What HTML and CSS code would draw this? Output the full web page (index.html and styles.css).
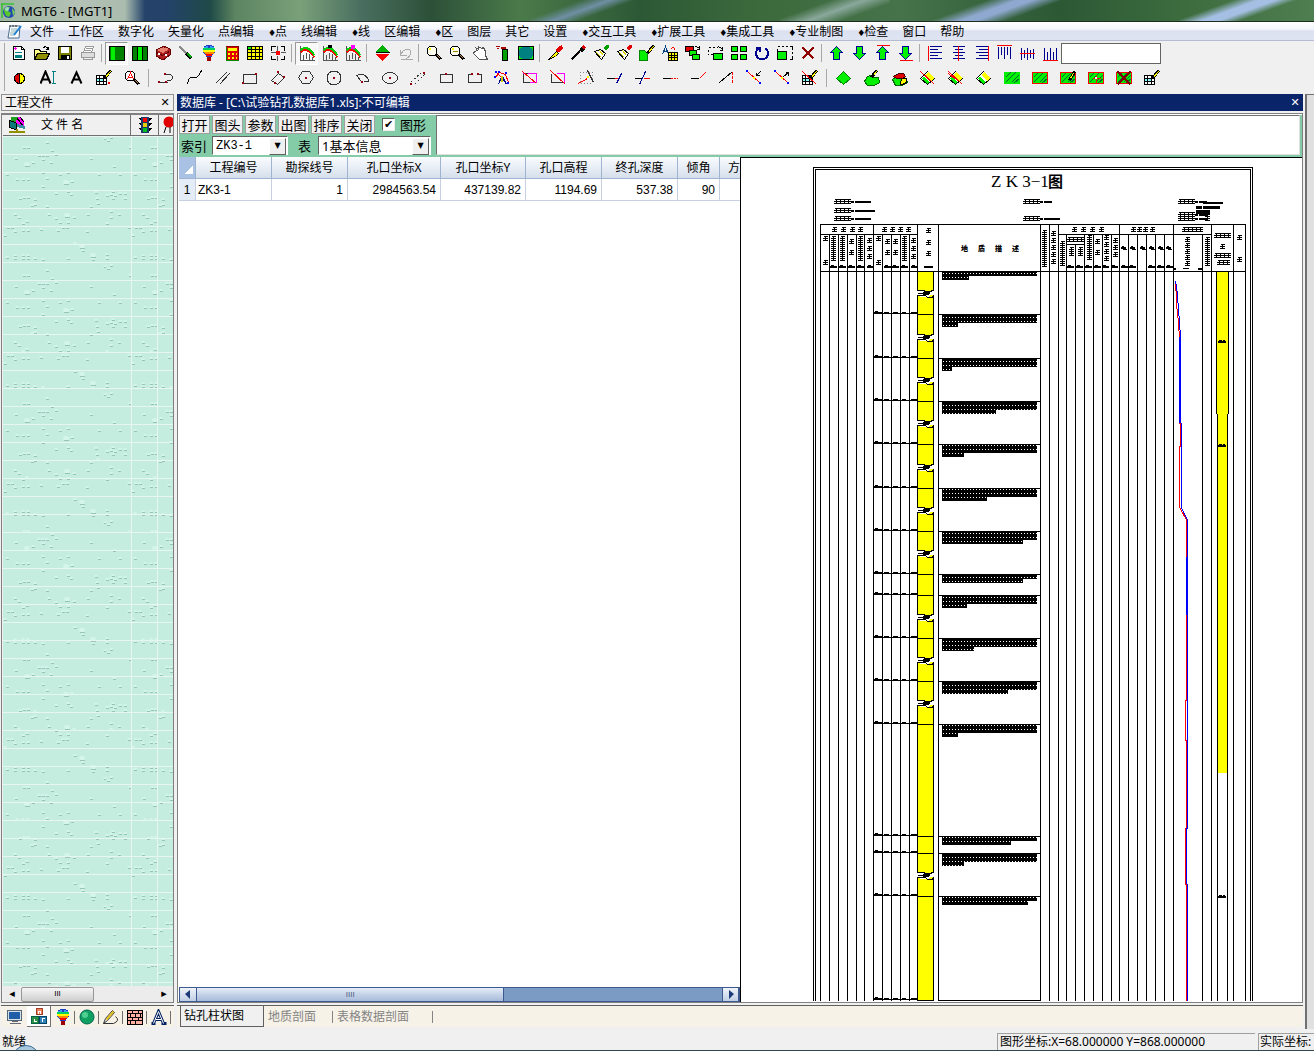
FILE: index.html
```html
<!DOCTYPE html>
<html lang="zh-CN">
<head>
<meta charset="utf-8">
<title>MGT6 - [MGT1]</title>
<link rel="stylesheet" href="styles.css">
</head>
<body>
<header class="titlebar">
  <svg class="app-icon" width="16" height="16" viewBox="0 0 16 16"><circle cx="8" cy="9" r="6" fill="#2348b4"/><path d="M3 6q3-3 6-2l-2 4 3 2-2 4q-5-1-5-8z" fill="#58c830"/><path d="M11 5l3 4-2 4z" fill="#7fd850"/><circle cx="6" cy="6" r="2" fill="#bfe6ff" opacity=".7"/><path d="M0 1h13M1 1v14" stroke="#00c800" fill="none"/></svg>
  <h1 class="app-title">MGT6 - [MGT1]</h1>
</header>
<nav class="menubar">
  <svg class="doc-icon" width="16" height="16" viewBox="0 0 16 16"><path d="M3 2h10l-1 12H1z" fill="#fff" stroke="#4a6a8a"/><path d="M4 5h6M4 7h6M3 9h5M3 11h4" stroke="#8ab0b8"/><path d="M14 2L7 11" stroke="#1f7fd0" stroke-width="2"/><path d="M3 1v2M6 1v2M9 1v2" stroke="#333"/></svg>
  <a href="#">文件</a><a href="#">工作区</a><a href="#">数字化</a><a href="#">矢量化</a><a href="#">点编辑</a><a href="#"><i>♦</i>点</a><a href="#">线编辑</a><a href="#"><i>♦</i>线</a><a href="#">区编辑</a><a href="#"><i>♦</i>区</a><a href="#">图层</a><a href="#">其它</a><a href="#">设置</a><a href="#"><i>♦</i>交互工具</a><a href="#"><i>♦</i>扩展工具</a><a href="#"><i>♦</i>集成工具</a><a href="#"><i>♦</i>专业制图</a><a href="#"><i>♦</i>检查</a><a href="#">窗口</a><a href="#">帮助</a>
</nav>
<div class="toolbars">
  <div class="toolbar" id="bar-main"></div>
  <div class="toolbar wide" id="bar-edit"></div>
</div>
<div class="workspace">
  <aside class="side">
    <div class="side-title"><span>工程文件</span><button class="close" aria-label="关闭工程文件">✕</button></div>
    <div class="side-box">
      <div class="list-head">
        <div class="head-name">
          <svg width="18" height="18" viewBox="0 0 18 18" shape-rendering="crispEdges"><path d="M3 1h9l4 3v7H9z" fill="#f0f"/><path d="M3 1h7l-3 6-4-2z" fill="#20a020"/><path d="M1 4l7 3v7l-7-3z" fill="#087878" stroke="#000"/><path d="M9 2l6 8M12 1l4 5" stroke="#000"/><path d="M9 8l8 2v3l-8-2z" fill="#3090a0"/><path d="M1 16h16M9 13v3" stroke="#909000" stroke-width="2"/></svg>
          <span>文 件 名</span>
        </div>
        <div class="head-light"><svg width="14" height="18" viewBox="0 0 14 18" shape-rendering="crispEdges"><path d="M0 2h14l-3 3H3zM0 7h14l-3 3H3zM0 12h14l-3 3H3z" fill="#000"/><path d="M3 1h8v16H3z" fill="#1c3a6a"/><path d="M5 2h4v4H5z" fill="#f00"/><path d="M5 7h4v4H5z" fill="#e8d000"/><path d="M5 12h4v4H5z" fill="#00c020"/></svg></div>
        <div class="head-ball"><svg width="10" height="18" viewBox="0 0 10 18"><circle cx="6" cy="6" r="5.500" fill="#e00000"/><path d="M3 11l-2 6M7 11v6" stroke="#000"/></svg></div>
      </div>
      <div class="file-list" id="file-list"></div>
      <div class="hbar"><span class="arrow">◂</span><span class="thumb">III</span><span class="arrow end">▸</span></div>
    </div>
    <div class="side-tabs" id="side-tabs"></div>
  </aside>
  <main class="main">
    <div class="main-title"><span>数据库 - [C:\试验钻孔数据库1.xls]:不可编辑</span><button class="close" aria-label="关闭数据库">✕</button></div>
    <div class="main-box">
      <div class="form">
        <div class="controls">
          <div class="row">
            <button class="btn">打开</button><button class="btn">图头</button><button class="btn">参数</button><button class="btn">出图</button><button class="btn">排序</button><button class="btn">关闭</button>
            <label class="check"><input type="checkbox" checked>图形</label>
          </div>
          <div class="row">
            <label for="idx">索引</label>
            <span class="combo"><select id="idx" class="idx"><option>ZK3-1</option></select></span>
            <label for="tbl" class="tbl-label">表</label>
            <span class="combo"><select id="tbl" class="tbl"><option>1基本信息</option></select></span>
          </div>
        </div>
        <textarea class="memo" aria-label="内容"></textarea>
      </div>
      <div class="panes">
        <section class="data">
          <div class="table-wrap">
            <table>
              <colgroup><col class="c0"><col class="c1"><col class="c1"><col class="c2"><col class="c3"><col class="c1"><col class="c1"><col class="c4"><col class="c1"></colgroup>
              <thead><tr><th class="corner"></th><th>工程编号</th><th>勘探线号</th><th>孔口坐标X</th><th>孔口坐标Y</th><th>孔口高程</th><th>终孔深度</th><th>倾角</th><th class="cut">方</th></tr></thead>
              <tbody><tr><th>1</th><td class="txt">ZK3-1</td><td>1</td><td>2984563.54</td><td>437139.82</td><td>1194.69</td><td>537.38</td><td>90</td><td></td></tr></tbody>
            </table>
          </div>
          <div class="xbar"><span class="xbtn"><svg width="16" height="13" viewBox="0 0 16 13"><path d="M10 2v9L5 6z" fill="#1c3a78"/></svg></span><span class="xthumb">IIII</span><span class="xbtn end"><svg width="16" height="13" viewBox="0 0 16 13"><path d="M6 2v9l5-5z" fill="#1c3a78"/></svg></span></div>
        </section>
        <section class="log" id="log"></section>
      </div>
    </div>
    <div class="main-tabs"><a class="on" href="#">钻孔柱状图</a><a href="#">地质剖面</a><a class="last" href="#">表格数据剖面</a></div>
  </main>
  <div class="gutter"></div>
</div>
<footer class="status"><span class="ready">就绪</span><span class="cell">图形坐标:X=68.000000 Y=868.000000</span><span class="cell short">实际坐标:</span><span class="orb"></span></footer>
<script src="app.js"></script>
</body>
</html>
```
FILE: styles.css
```css
* { box-sizing: border-box; }
body {
  margin: 0;
  height: 100vh;
  display: flex;
  flex-direction: column;
  overflow: hidden;
  background: #f0f0f0;
  color: #000;
  font: 12px/16px "Noto Sans", "Noto Sans CJK SC", sans-serif;
}
button, input, select, textarea { font: inherit; color: inherit; margin: 0; padding: 0; border-radius: 0; }
a { color: inherit; text-decoration: none; }
svg { display: block; flex: none; }

.titlebar {
  height: 22px;
  flex: none;
  display: flex;
  align-items: center;
  gap: 4px;
  padding-left: 1px;
  border-bottom: 1px solid #1c2c20;
  background:
    linear-gradient(90deg, #9db79f 0, #b4c2b6 80px, #a9bcae 125px, transparent 145px),
    linear-gradient(160deg, transparent 30%, #8fa8d0 46%, #8fa8d0 54%, transparent 70%) 930px 0 / 130px 22px no-repeat,
    linear-gradient(160deg, transparent 34%, #a5bfe4 46%, #a5bfe4 54%, transparent 64%) 1160px 0 / 154px 22px no-repeat,
    linear-gradient(160deg, transparent 34%, #6f8fa4 50%, transparent 64%) 520px 0 / 120px 22px no-repeat,
    linear-gradient(160deg, transparent 30%, #8aa89c 50%, transparent 70%) 780px 0 / 110px 22px no-repeat,
    linear-gradient(90deg, #24426a 0, #24426a 165px, #1f4a48 210px, #5c8460 235px, #7aa07a 300px, #4a6f60 360px, #2c5038 430px, #4b7a4a 520px, #2d5835 640px, #3c6a3c 760px, #46734a 900px, #2c5834 1060px, #3f6f40 1200px, #4f7f50 100%);
}
.app-title { margin: 0; font-size: 13px; font-weight: 400; }

.menubar {
  height: 19px;
  flex: none;
  display: flex;
  align-items: center;
  gap: 14px;
  padding: 2px 0 0 7px;
  border-bottom: 1px solid #b4bcd4;
  background: linear-gradient(#fff 0, #f4f6fb 40%, #dce1f1 50%, #dfe4f3 100%);
  white-space: nowrap;
}
.menubar .doc-icon { margin-right: -7px; }
.menubar i { display: inline-block; width: 7px; font: 9px/12px "DejaVu Sans", sans-serif; }

.toolbars { height: 53px; flex: none; padding: 0 0 0 7px; background: linear-gradient(#a8a8a8, #a8a8a8) 4px 2px / 1px 48px no-repeat; }
.toolbar { display: flex; align-items: center; height: 24px; }
.toolbar.wide { height: 26px; margin-left: -1px; }
.toolbar button {
  width: 23px;
  height: 23px;
  border: 1px solid transparent;
  background: none;
  display: flex;
  align-items: center;
  justify-content: center;
  flex: none;
}
.toolbar button.pressed { background: #f8f8f8; border-color: #999 #fff #fff #999; }
.toolbar.wide button { width: 28px; }
.toolbar .sep { width: 6px; height: 18px; flex: none; background: linear-gradient(#a8a8a8, #a8a8a8) 2px 0 / 1px 100% no-repeat; }
.toolbar input { width: 100px; height: 21px; border: 1px solid #646464; background: #fff; }

.workspace { flex: 1; min-height: 0; display: flex; gap: 3px; }
.side { width: 174px; flex: none; display: flex; flex-direction: column; padding-left: 1px; }
.close { border: 0; background: none; width: 14px; font: 11px/14px "DejaVu Sans", sans-serif; }
.side-title {
  height: 17px; flex: none;
  display: flex; align-items: center; justify-content: space-between;
  padding: 0 1px 0 3px;
  border: 1px solid #909090;
}
.side-box { flex: 1; min-height: 0; margin-top: 2px; border: 1px solid #808080; border-top-width: 2px; display: flex; flex-direction: column; background: #f0f0f0; padding-left: 1px; }
.list-head { display: flex; height: 21px; flex: none; border-bottom: 1px solid #707070; overflow: hidden; }
.list-head > div { display: flex; align-items: center; border-right: 1px solid #707070; }
.head-name { width: 128px; flex: none; gap: 15px; padding-left: 5px; }
.head-light { width: 28px; flex: none; padding-left: 7px; }
.list-head .head-ball { flex: 1; padding-left: 4px; border-right: 0; }
.file-list { flex: 1; min-height: 0; overflow: hidden; background: #c4ede0; }
.hbar { height: 16px; flex: none; display: flex; align-items: center; background: #ececec; }
.hbar .arrow { width: 18px; text-align: center; font: 11px/14px "DejaVu Sans", sans-serif; }
.hbar .end { margin-left: auto; }
.hbar .thumb { width: 73px; height: 15px; border: 1px solid #979797; border-radius: 2px; background: linear-gradient(#f6f6f6, #e2e2e2 50%, #cfcfcf); text-align: center; font: 8px/12px "Liberation Sans", sans-serif; }
.side-tabs { height: 22px; flex: none; margin-top: 2px; display: flex; background: #f7f2e8; border-top: 1px solid #606060; margin-bottom: 4px; padding-left: 2px; }
.side-tabs button { width: 24px; height: 21px; border: 0; background: none; display: flex; align-items: center; justify-content: center; }
.side-tabs button + button { background: linear-gradient(#707070, #707070) 100% 5px / 1px 13px no-repeat; }
.side-tabs button.on { background: #fff; border: 1px solid #707070; border-top: 0; border-left: 0; }

.main { flex: 1; min-width: 0; display: flex; flex-direction: column; }
.main-title { height: 17px; flex: none; background: #0a246a; color: #fff; display: flex; align-items: center; justify-content: space-between; padding: 0 1px 0 3px; }
.main-box { flex: 1; min-height: 0; margin-top: 2px; border: 1px solid #808080; padding: 1px 0 0 1px; display: flex; flex-direction: column; background: #fff; }
.form { height: 42px; flex: none; display: flex; background: #84cba8; padding: 0 2px 1px 0; gap: 5px; }
.controls { display: flex; flex-direction: column; gap: 2px; font-size: 13px; flex: none; }
.row { display: flex; align-items: center; gap: 2px; height: 19px; white-space: nowrap; }
.btn { width: 31px; height: 19px; border: 1px solid; border-color: #fff #505050 #505050 #fff; background: #f0f0f0; line-height: 16px; outline: 1px solid #a0a0a0; outline-offset: -1px; }
.check { display: flex; align-items: center; gap: 5px; margin-left: 5px; }
.check input { appearance: none; width: 13px; height: 13px; background: #fff; border: 1px solid; border-color: #606060 #eee #eee #606060; display: grid; place-items: center; }
.check input::before { content: "✔"; font: 11px/11px "DejaVu Sans", sans-serif; }
.row > label[for] { padding-left: 2px; }
.row > .tbl-label { padding: 0 4px 0 6px; }
.row > label[for="tbl"] { padding-left: 8px; padding-right: 5px; }
.combo { position: relative; display: flex; }
.row > label[for="idx"] + .combo { margin-left: 3px; }
.combo select { appearance: none; height: 19px; border: 1px solid; border-color: #606060 #fff #fff #606060; background: #fff; padding-left: 3px; line-height: 16px; }
.combo .idx { width: 76px; font: 12px/16px "Liberation Mono", monospace; }
.combo .tbl { width: 113px; }
.combo::after { content: "▼"; position: absolute; right: 2px; top: 2px; width: 15px; height: 15px; background: #f0f0f0; border: 1px solid; border-color: #fff #606060 #606060 #fff; font: 8px/14px "DejaVu Sans", sans-serif; text-align: center; pointer-events: none; }
.memo { flex: 1; height: 40px; resize: none; background: #fff; border: 1px solid; border-color: #707070 #e0e0e0 #e0e0e0 #707070; }

.panes { flex: 1; min-height: 0; display: flex; }
.data { flex: 1 1 0; min-width: 0; display: flex; flex-direction: column; }
.table-wrap { flex: 1; min-height: 0; overflow: hidden; }
table { border-collapse: separate; border-spacing: 0; table-layout: fixed; width: 617px; }
.c0 { width: 17px; } .c1 { width: 76px; } .c2 { width: 93px; } .c3 { width: 85px; } .c4 { width: 42px; }
th, td { height: 22px; padding: 0 4px; border: solid #c6d0e0; border-width: 0 1px 1px 0; font-weight: 400; white-space: nowrap; overflow: hidden; line-height: 18px; }
thead th { background: linear-gradient(#fafcfe, #e8eef6 50%, #d5dfeb); border-color: #9fb4d0; padding: 0; }
thead th.cut { text-align: left; padding-left: 8px; }
thead th.corner { background: linear-gradient(135deg, transparent 60%, #fff 60%) 4px 5px / 10px 12px no-repeat, #a9c1e2; }
tbody th { background: #e4ecf7; padding: 0; }
td, tbody th { font: 12px/18px "Liberation Sans", sans-serif; }
td { text-align: right; }
td.txt { text-align: left; padding-left: 2px; }
.xbar { height: 15px; flex: none; display: flex; background: #7b9ac4; border: 1px solid #3d5a90; }
.xbtn { width: 17px; background: linear-gradient(#f0f4fa, #c0cee4); border-right: 1px solid #3d5a90; }
.xbtn.end { margin-left: auto; border-left: 1px solid #3d5a90; }
.xthumb { width: 55%; background: linear-gradient(#e6edf8, #c4d2e8 50%, #a9bcdb); border-right: 1px solid #3d5a90; text-align: center; color: #50607c; font: 8px/13px "Liberation Sans", sans-serif; }
.log { flex: 1 1 0; min-width: 0; overflow: hidden; border-left: 1px solid #000; border-top: 1px solid #000; background: #fff; }

.main-tabs { height: 22px; flex: none; margin: 2px 0 4px; display: flex; background: #f7f2e8; border-top: 1px solid #606060; padding-left: 3px; color: #848484; line-height: 21px; }
.main-tabs a { width: 69px; padding-left: 3px; }
.main-tabs a + a { padding-left: 4px; background: linear-gradient(#848484, #848484) 100% 5px / 1px 12px no-repeat; }
.main-tabs a.on { width: 84px; background: #f0f0f0; color: #000; border: 1px solid #606060; border-top: 0; line-height: 20px; }
.main-tabs a.last { width: 100px; }
.gutter { width: 9px; flex: none; background: #e0e0e0; border-left: 2px solid #707070; border-top: 1px solid #707070; margin-left: -1px; margin-bottom: 2px; }

.status { height: 20px; flex: none; display: flex; gap: 3px; align-items: stretch; position: relative; border-bottom: 1px solid #304850; padding-top: 2px; white-space: nowrap; overflow: hidden; }
.ready { flex: 1; padding: 1px 0 0 2px; }
.status .cell { width: 258px; border-left: 1px solid #a0a0a0; border-top: 1px solid #a0a0a0; padding-left: 2px; line-height: 16px; }
.status .short { width: 56px; padding-left: 1px; }
.orb { position: absolute; left: 12px; top: 14px; width: 28px; height: 28px; border-radius: 50%; border: 1px solid #3c6c94; background: #a8c8e0; }
```
FILE: app.js
```js
// Small builders for the 16x16 pixel icons.
const S = (d, c = '#000', w = 1) => `<path d="${d}" fill="none" stroke="${c}" stroke-width="${w}" transform="translate(.5 .5)"/>`;
const F = (d, c = '#000') => `<path d="${d}" fill="${c}"/>`;
const B = (d, fill, c = '#000') => `<path d="${d}" fill="${fill}" stroke="${c}" transform="translate(.5 .5)"/>`;
const dots = (list, c = '#900010') => list.map(([x, y]) => F(`M${x} ${y}h2v2h-2z`, c)).join('');
const svg = (body, w = 16, crisp = true) => `<svg width="${w}" height="16" viewBox="0 0 ${w} 16"${crisp ? ' shape-rendering="crispEdges"' : ''}>${body}</svg>`;

const G = '#00f000', N = '#000090', R = '#f00';
const curve = (dot) => S('M1 0v15h14M4 9v6M7 7v6M10 8v7M13 11v4', '#555') + S('M1 7q6-7 14 5', '#f00', 2) + S('M1 5q6-7 14 5', '#00d000', 2) + dot;
const lens = '<circle cx="6" cy="6" r="5" fill="#fffff0" stroke="#000"/>' + F('M3 3h2v2H3z', '#ff0') + S('M10 9l4 5', '#000', 3) + S('M11 10l3 3', '#c08030');
const balloon = F('M5 0h6v1h2v2h1v4l-2 3h-1v2H5v-2H4L2 7V3h1V1h2z', '#2040c0') + F('M5 1h2v2H3V2h2zM9 1h2v1h2v1H9z', '#30a0ff') + F('M2 3h12v2H2z', '#00d060') + F('M2 5h12v2H2z', '#ff0') + F('M3 7h10v2H4z', '#f80') + F('M5 9h6v2H5z', '#f00') + F('M6 12h4v4H6z', '#a00000');
const brush = (c) => S('M15 0l-4 4', c, 3) + B('M1 6l6-2 5 4-4 6z', '#fff') + S('M3 7l5 5M6 5l4 5', '#d8d000');
const pencil = S('M14 0L8 8', '#000', 3) + S('M14 1L9 7', '#ff0') ;
const grid = B('M0 5h10v9H0z', '#fff') + S('M0 8h10M0 11h10M3 5v9M7 5v9') + F('M1 9h2v2H1zM4 9h3v2H4z', '#8ff');
const arrowUp = B('M7 1l6 6h-3v7H4V7H1z', G, '#000098'), arrowDn = B('M7 14l6-6h-3V1H4v7H1z', G, '#000098');
const hatch = F('M0 2h16v12H0z', G) + S('M1 7l5-5M1 12L11 2M7 12l7-7M10 12l5-4', '#063');
const redbox = S('M0 2h15v11H0z', R);
const diamond = B('M7 1l7 7-7 6-7-6z', '#fff') + F('M8 2l6 6-3 3-5-6z', '#ff0') + F('M2 8l2-1 5 5-2 2z', G);
const poly = (d) => S(d, '#333');

const main = [
  ['新建', B('M2 1h8l3 3v10H2z', '#fff') + S('M10 1v3h3') + F('M4 7h7v1H4zM4 10h7v3H4z', '#008080') + F('M3 3h3v1H3zM4 2h1v3H4z', '#f0f')],
  ['打开', B('M0 4h5l1 2h6v8H0z', '#ff8') + B('M3 8h12l-3 6H0z', '#909000') + S('M9 2q3-2 5 2M14 1v3h-3')],
  ['保存', B('M1 1h13v13H1z', '#808000') + F('M4 2h8v6H4z', '#fff') + F('M4 10h9v5H4z') + F('M10 11h2v3h-2z', '#fff')],
  ['打印', B('M5 1h8l-2 6H3z', '#fff', '#999') + B('M1 7h13v5H1z', '#ddd', '#999') + S('M5 3h6M4 5h6M3 12h9v2H3z', '#999')], '|',
  ['单窗', B('M0 1h15v14H0z', '#008000') + F('M2 2h4v13H2z', G), 1],
  ['双窗', B('M0 1h15v14H0z', '#008000') + F('M6 2h4v13H6z', G) + S('M5 1v14M10 1v14')],
  ['工具箱', '<path d="M1 5l8-4 6 3v6l-7 5-7-4z" fill="#b02020" stroke="#600"/>' + F('M2 5l7-3 5 2-6 4z', '#e88070') + S('M5 3q3-4 5 0M1 7l6 3 7-4', '#600') + F('M3 8h2v2H3zM10 9h2v2h-2z', '#fff')],
  ['螺丝刀', S('M1 1l7 7', '#888', 2) + S('M8 8l5 5', '#000', 4) + S('M9 8l4 4', '#00a000', 2)],
  ['气球', balloon],
  ['计算器', B('M2 1h12v14H2z', '#e00000', '#800') + F('M4 3h9v3H4z', '#ff0') + F('M4 8h2v2H4zM8 8h2v2H8zM12 8h1v2h-1zM4 12h2v2H4zM8 12h2v2H8zM12 12h1v2h-1z', '#ff0') + S('M2 1v14h12', '#080')],
  ['表格', B('M0 1h15v13H0z', '#ff0') + S('M0 4h15M0 7h15M0 11h15M4 1v13M8 1v13M12 1v13') + F('M1 2h3v2H1z', G)],
  ['定位', S('M1 5V1h4M10 1h4v4M14 10v4h-4M5 14H1v-4') + S('M7 0v5M7 10v5M0 7h5M10 7h5', '#555') + F('M6 6h4v4H6z', R)], '|',
  ['曲线一', curve(''), 1], ['曲线二', curve(F('M6 0h4v3H6z'))], ['曲线三', curve(F('M6 0h4v4H6z', '#f0f'))], '|',
  ['上下', F('M8 0l7 7H1z', '#00b000') + F('M8 16l7-7H1z', '#f00') + S('M1 7h14')],
  ['撤销', S('M3 4v6h6M3 9Q8 1 13 5q2 4-4 8M3 14h12', '#aaa')], '|',
  ['放大', lens], ['缩小', lens + F('M4 6h5v1H4z', '#a08000')],
  ['移动', B('M2 6l3-1-2-3 3 2V1l3 2 2-1 2 4v4l2 4H7L1 8z', '#fff', '#555')],
  ['喷漆', B('M7 4h5v11H7z', '#00a000') + F('M1 1h4v1H1zM2 3h2v1H2zM6 2h5v2H6z', '#a00')],
  ['全图', B('M0 1h15v13H0z', '#008080') + F('M1 2h3v1H2v2H1zM12 2h3v3h-1V3h-2zM1 11h1v2h2v1H1zM14 11h1v3h-3v-1h2z', G)], '|',
  ['画笔', S('M15 1L9 6', '#e00000', 4) + B('M9 6L1 14l7-3 3-3z', '#ff0')],
  ['吸管', S('M9 6L1 14', '#000', 2) + S('M14 1l-4 5', '#000', 4) + S('M14 1l-2 2', '#d00', 3)],
  ['绿刷', brush('#00a000')], ['红刷', brush('#e00000')],
  ['修改', B('M0 5h5l3 3v7H0z', G, '#080') + pencil],
  ['属性', S('M0 9l3-8 3 8M1 6h4', '#004080') + B('M6 7h9v8H6z', '#ff0') + S('M6 10h9M6 12h9M9 7v8M12 7v8') + S('M8 4q3-4 5 1', R)],
  ['复制', B('M0 1h8v5H0z', '#e00000') + B('M4 5h7v5H4z', G) + B('M7 9h7v5H7z', G) + S('M10 1l5 2M14 0v4h-3')],
  ['粘贴', S('M0 2h2m2 0h2m2 0h1M0 4v2m0 2v1m2 0h2') + B('M5 8h9v6H5z', G) + S('M10 1l5 3M14 1v4h-3')],
  ['阵列', B('M0 1h6v5H0zM9 1h6v5H9zM0 9h6v5H0zM9 9h6v5H9z', G)],
  ['旋转', S('M4 3a6 6 0 1 0 7 0M1 2h4v4', N, 2)],
  ['缩放', S('M0 1h2m2 0h2m2 0h2m2 0h3v3m0 2v2m0 2v4h-3M0 3v3') + B('M0 6h9v8H0z', G)],
  ['删除', S('M2 2l11 11M13 2L2 13', '#900000', 2)], '|',
  ['上移', arrowUp], ['下移', arrowDn], ['置顶', arrowUp + S('M1 0h13', R)], ['置底', arrowDn + S('M1 15h13', R)], '|',
  ['左对齐', S('M2 1h12M2 4h8M2 7h12M2 10h8M2 13h12', N) + S('M1 0v15', R)],
  ['水平居中', S('M2 1h12M4 4h8M2 7h12M4 10h8M2 13h12', N) + S('M8 0v15', R)],
  ['右对齐', S('M2 1h12M5 4h9M2 7h12M5 10h9M2 13h12', N) + S('M15 0v15', R)],
  ['上对齐', S('M2 1v12M5 1v8M8 1v12M11 1v8M14 1v12', N) + S('M0 0h15', R)],
  ['垂直居中', S('M2 2v12M5 4v8M8 2v12M11 4v8M14 3v10', N) + S('M0 8h15', R)],
  ['下对齐', S('M2 2v12M5 6v8M8 2v12M11 6v8M14 2v12', N) + S('M0 15h15', R)],
];
const edit = [
  ['颜色', F('M8 3a5 5 0 0 0 0 11z', '#e00000') + F('M8 3a5 5 0 0 1 0 11z', '#ff0') + S('M7 3a5 5 0 0 0 0 10a5 5 0 0 0 0-10v10')],
  ['文字', '<g shape-rendering="auto">' + S('M0 13L5 1l5 12M2 9h6', '#000', 2) + '</g>' + S('M13 1v12M11 1h4M11 13h4', '#008080')],
  ['字体', '<g shape-rendering="auto">' + S('M3 13L8 2l5 11M5 9h6', '#000', 2) + '</g>'],
  ['表编辑', grid + pencil + F('M12 12h2v2h-2z', R)],
  ['查找', lens.replace('#fffff0', '#fff').replace('#ff0', '#fff') + S('M3 9l3-7 3 7M4 7h4', R)], '|',
  ['线一', S('M1 12h8M6 4h6q4 3 0 6H8', '#333') + dots([[0, 11], [7, 11], [6, 3]])],
  ['曲线', S('M1 14q1-7 4-7t5 0q3-2 5-7')], ['平行线', poly('M1 13L12 2M5 14L15 3')],
  ['矩形', poly('M1 4h13v9H1z') + dots([[0, 12], [13, 3]])],
  ['斜矩形', poly('M1 10l7-7 6 4-7 7z') + dots([[7, 1], [13, 6], [4, 12]])],
  ['六边形', poly('M4 1h7l4 6-4 6H4L0 7z') + dots([[7, 7]])],
  ['圆', '<circle cx="8" cy="8" r="7" fill="none" stroke="#333"/>' + dots([[7, 7]])],
  ['弧', poly('M2 5q7-4 12 4v2h-5M2 5l5 6') + dots([[7, 11]])],
  ['椭圆', '<ellipse cx="8" cy="8" rx="7.500" ry="5.500" fill="none" stroke="#333"/>' + dots([[7, 7]])],
  ['虚线', '<path d="M1 12L13 1M5 14L15 4" stroke="#333" stroke-dasharray="2 2"/>' + dots([[0, 13], [13, 2]])],
  ['闭合', poly('M2 4v8h12V4z') + dots([[7, 3]])], ['断开', poly('M6 4H2v8h13V4h-3') + dots([[5, 3], [11, 3]])],
  ['节点', S('M1 7l4-5 6 2 3 8M3 3l8 8', R) + dots([[0, 6], [4, 1], [11, 2], [13, 12], [1, 1]], '#00f') + S('M7 6l-3 8M8 6l4 8M6 10h4', '#008') + S('M7 5v6', '#cc0', 2)],
  ['裁剪', S('M1 3h13v9H1z', '#f0f') + S('M1 3v9h6M1 3h4', '#333') + S('M0 1l14 12', R)],
  ['内裁', S('M6 3h8v9', '#f0f') + S('M1 3v9h12', '#333') + S('M0 0l15 14', R)],
  ['外裁', '<path d="M2 2h12v11H2z" fill="none" stroke="#888" stroke-dasharray="1 2"/>' + S('M9 0l6 12', '#333') + S('M0 13l9-5', R) + F('M9 6h2v2H9z', '#ff0')],
  ['延伸', S('M0 8h8') + S('M8 8h4', R) + S('M15 3l-5 10', N)],
  ['相交', S('M0 8h8') + S('M9 8h7', R) + S('M11 1L5 14', N)],
  ['接线', S('M0 8h8') + '<path d="M9 8.500h8" stroke="red" stroke-dasharray="2 1"/>'],
  ['折线', S('M0 8h8') + S('M9 8l7-7', R)],
  ['夹角', S('M1 12L14 1') + '<path d="M14.500 2v12" stroke="red" stroke-dasharray="3 1"/>'],
  ['收点', S('M1 1l13 12', R) + dots([[0, 0], [13, 12]], '#00f') + dots([[7, 7]], '#ff0') + S('M14 1l-4 4M10 2v3h3')],
  ['放点', S('M1 1l13 12', R) + dots([[0, 0], [13, 12]], '#00f') + dots([[7, 7]], '#ff0') + S('M9 6l5-4M11 2h3v3')],
  ['改表', grid + S('M0 1l14 13', R) + pencil], '|',
  ['区', B('M7 1l7 7-7 6-7-6z', G, '#080')],
  ['区改', B('M3 6q5-2 6 1h5l1 5-5 3H3l-3-4z', G, '#060') + S('M12 0L7 7', '#000', 3) + S('M12 1L9 5', '#ff0')],
  ['区切', B('M0 9l5-3 9 2 1 4-5 3H3z', G, '#060') + B('M9 8h5v4l-4 2H8z', '#ff0') + B('M1 6l5-3h5l2 3-3 2H4z', '#e00000', '#400')],
  ['区一', diamond + S('M0 1l14 13', R)], ['区二', diamond + S('M0 1l14 13M0 3l7 6', R)], ['区三', diamond],
  ['填充', hatch], ['填框', hatch + redbox], ['填改', hatch + redbox + S('M14 1l-5 9', '#000', 3) + S('M13 3l-3 5', '#ff0')],
  ['填点', hatch + redbox + S('M8 4v8M4 8h8', R) + dots([[7, 7]], '#fff')],
  ['填删', hatch + redbox + S('M1 1l13 13M14 1L1 14', '#800000', 2)],
  ['属性表', grid + pencil],
];
function fillBar(id, items) {
  document.getElementById(id).innerHTML = items.map(it => it === '|' ? '<span class="sep"></span>' :
    `<button aria-label="${it[0]}"${it[2] ? ' class="pressed"' : ''}>${svg(it[1])}</button>`).join('');
}
fillBar('bar-main', main);
fillBar('bar-edit', edit);
document.getElementById('bar-main').insertAdjacentHTML('beforeend', '<input type="text" aria-label="查询">');

const tabs = [
  ['屏幕', B('M0 1h14v10H0z', '#d8e0e8', '#567') + F('M2 3h11v7H2z', '#1f5fa8') + F('M5 12h6v1H5zM3 14h11v1H3z', '#667')],
  ['积木', B('M5 0h6v6H5z', '#f08060', '#a04020') + B('M0 8h7v7H0z', '#309048', '#064') + B('M8 8h7v7H8z', '#3080b8', '#046') + S('M7 2v3M9 2v3M7 3h2M3 10v3h2M11 10v3M10 10h3', '#fff'), 1],
  ['气球', balloon],
  ['圆球', '<g shape-rendering="auto"><circle cx="8" cy="8" r="7" fill="#10a060" stroke="#065"/><circle cx="6" cy="6" r="3" fill="#50d090"/></g>'],
  ['铅笔', '<g shape-rendering="auto">' + S('M0 14l2-5L9 1l2 2-7 8-4 3h10q7-3 2-7', '#333', 1) + S('M10 2L3 10', '#e0c020', 2) + '</g>'],
  ['砖', B('M0 1h15v14H0z', '#ffb0a0') + S('M0 4h15M0 8h15M0 11h15M5 1v3M11 1v3M8 4v4M3 4v4M13 4v4M5 8v3M11 8v3M8 11v4M3 11v4')],
  ['字', '<g shape-rendering="auto">' + S('M2 14L7 2l5 12M4 10h6M0 14h4M10 14h5', '#002060', 3) + S('M2 14L7 2l5 12M4 10h6', '#fff') + '</g>'],
];
document.getElementById('side-tabs').innerHTML = tabs.map(t => `<button aria-label="${t[0]}"${t[2] ? ' class="on"' : ''}>${svg(t[1])}</button>`).join('');

// Embossed paper behind the file list: a 128px tile and 18px row rules.
const bumps = '315,30 332,28 325,36 140,43 72,56 83,56 156,67 390,57 118,82 130,82 142,80 167,77 130,92 47,91 98,102 153,103 273,91 341,114 130,133 22,139 180,139 204,133 297,139 360,139 50,152 70,152 83,152 140,151 216,158 128,173 167,196 203,190 212,197 288,192 60,209 72,208 83,208 106,212 290,209 340,188 320,200 334,199 345,200 360,196 376,196 340,209 376,209 106,228 95,232 293,226 142,235 272,235 45,259 58,268 148,258 168,270 222,268 264,258 333,250 333,266 358,258 82,280 70,284 180,281 204,282 322,285 25,296 36,296 188,296 202,296 388,298 46,309 70,307 83,307 122,304 174,307 262,310 15,322 225,345 249,366 22,388 46,380 70,380 83,380 46,391 70,391 83,391 105,391 130,393 204,391 278,393 320,379 322,391'.split(' ').map(p => p.split(',').map(v => +v / 3));
const large = [[82, 107], [198, 161], [202, 262], [245, 354], [278, 382]].map(p => p.map(v => v / 3));
const bump = (x, y, r) => {
  const cx = Math.round(x - 3), cy = Math.round(y - 8);
  return `<ellipse cx="${cx}" cy="${cy}" rx="${r}" ry="${r - 1}" fill="#d4f5eb"/><path d="M${cx - r + 1} ${cy + r - .5}h${2 * r - 1}" stroke="#98c4b6"/>`;
};
document.getElementById('file-list').innerHTML = `<svg width="100%" height="100%"><defs>
<pattern id="paper" width="128" height="128" patternUnits="userSpaceOnUse">${bumps.map(b => bump(b[0], b[1], 2)).join('')}${large.map(b => bump(b[0], b[1], 3)).join('')}</pattern>
<pattern id="rules" y="1" width="200" height="18" patternUnits="userSpaceOnUse"><path d="M0 17.500h200" stroke="#e8f6f2"/></pattern></defs>
<rect width="100%" height="100%" fill="url(#paper)"/><rect width="100%" height="100%" fill="url(#rules)"/>
<path d="M128.500 0v3000M154.500 0v3000" stroke="#e8f6f2"/></svg>`;

// Borehole log.
const out = [];
const line = (d, c = '#000') => out.push(`<path d="${d}" fill="none" stroke="${c}"/>`);
const V = (x, a, b) => line(`M${x + .5} ${a}V${b}`);
const H = (y, a, b) => line(`M${a} ${y + .5}H${b}`);
const box = (x, y, w, h, f = '#000') => out.push(`<rect x="${x}" y="${y}" width="${w}" height="${h}" fill="${f}"/>`);
const mark = (x, y, n = 1) => { for (let i = 0; i < n; i++) out.push(`<path d="M${x + i * 4} ${y - 2}h5v1h-2v1h2v1h-2v1h2v1h-5v-1h2v-1h-2v-1h2z"/>`); };
const stack = (x, y, n, step = 4) => { for (let i = 0; i < n; i++) mark(x, y + i * step); };
const END = 1001;

box(917, 271, 16, END - 271, '#ff0');
box(1216, 271, 12, 143, '#ff0');
box(1217, 414, 10, 359, '#ff0');

V(813, 167, END); V(815, 169, END); V(1252, 167, END); V(1250, 169, END);
H(167, 813, 1253); H(169, 815, 1251);
H(224, 820, 1246); H(271, 820, 1246); H(234, 820, 917); H(234, 1058, 1211); H(244, 1066, 1084);
[820, 873, 917, 938, 1040, 1049, 1058, 1119, 1173, 1211, 1233, 1245].forEach(x => V(x, 224, x === 1211 || x === 1233 ? END : END));
[829, 838, 847, 856, 864, 882, 891, 900, 909, 1066, 1084, 1093, 1102, 1111, 1128, 1137, 1146, 1155, 1164, 1202].forEach(x => V(x, 234, END));
V(1075, 244, END); V(933, 271, END);
V(1216, 271, 414); V(1228, 271, 414); V(1217, 414, END); V(1227, 414, END);

[[271, 1, 27], [314, 2, 16], [358, 2, 10], [401, 2, 54], [444, 2, 22], [488, 2, 45], [531, 2, 81], [574, 1, 81], [595, 2, 25], [638, 2, 32], [681, 2, 66], [724, 2, 16], [836, 1, 69], [853, 2, 22], [896, 1, 86], [1000, 0, 0]].forEach(([y, n, w], i) => {
  if (i) {
    H(y, 917, 934); H(y, 938, 1041); H(y - 1, 873, 917);
    [[873, 9], [884, 5], [893, 5], [902, 4], [911, 6]].forEach(([x, l]) => box(x, y - 2, l, 2));
    box(875, y - 3, 3, 2);
  }
  for (let k = 0; k < n; k++) box(942, y + 1 + k * 4, 95, 4, 'url(#script)');
  if (w) box(942, y + 1 + n * 4, w, 4, 'url(#script)');
});
[293, 337, 380, 423, 467, 510, 553, 617, 660, 703, 875].forEach(y => {
  out.push(`<path d="M916 ${y - 2}h7l3 1h4l4-1v4h-4l-2 2h-4l-8-1z" fill="#fff"/>`);
  line(`M917 ${y - 2.5}h6l3 1h4l3-1M917 ${y + 2.500}h8l3 2h3l3-1`);
  out.push(`<path d="M918 ${y}h4l2-1h6v1l-2 2h-4l-2-1h-4z"/>`);
});
[342, 446, 897].forEach(y => { box(1218, y - 1, 8, 2); box(1219, y - 2, 3, 1); box(1223, y - 2, 2, 1); });

line('M1175.500 281v6l1 8v10l1 7 1 12 1 13v86h1v23h-1v61l7 13v180h-1v40h1v88h-1v56h1V1001', '#f00');
line('M1175.500 281l1 5 1 9 1 15 1 12 1 15v86h1v85l6 12v178h0v130h-1v56h1V1001', '#00f');
line('M1179.500 337v86M1181.500 446v62M1186.500 557v58M1186.500 828v56', '#00f');
line('M1180.500 423v23M1186.500 520v37M1186.500 616v84M1186.500 740v88M1186.500 884V1001', '#f00');

// Caption rows above the table.
[[834, 201, 4, 16], [834, 210, 4, 18], [834, 218, 4, 15], [1023, 201, 4, 5], [1023, 218, 4, 15], [1178, 201, 4, 8], [1178, 214, 4, 7], [1178, 218, 4, 7]].forEach(([x, y, n, w]) => {
  mark(x, y, n); box(x + n * 4 + 1, y, 3, 2);
  for (let i = 0; i < w; i += 4) box(x + n * 4 + 5 + i, y + (i / 4) % 2 - (i % 8 ? 1 : 0), 4, 2);
});
box(1203, 202, 20, 2); box(1203, 206, 17, 3); box(1196, 206, 6, 3); box(1196, 210, 14, 4); mark(1205, 214); mark(1205, 218);
// Column headings.
[834, 843, 852, 860, 884, 892, 900, 908, 1074, 1083, 1092, 1101].forEach(x => mark(x - 2, 229));
mark(1131, 229, 1); mark(1137, 229); mark(1143, 229); mark(1150, 229); mark(1182, 229, 5);
[230, 242, 253].forEach(y => mark(926, y)); box(924, 266, 9, 2);
[[823, 238, 2, 24], [831, 238, 6], [840, 238, 6], [849, 241, 2, 11], [858, 238, 6], [867, 240, 3, 8], [876, 238, 2, 24], [885, 241, 2, 11], [893, 241, 2, 11], [902, 238, 6], [911, 240, 3, 8], [1042, 232, 9], [1051, 233, 5, 7], [1060, 243, 6], [1069, 249, 2], [1078, 249, 2], [1087, 237, 6], [1095, 241, 2, 11], [1104, 237, 4, 7], [1113, 240, 3, 7], [1185, 239, 5, 6], [1205, 239, 7], [1237, 237, 2, 22]].forEach(([x, y, n, s]) => stack(x, y, n, s));
mark(1067, 239, 4);
[831, 840, 849, 858, 868, 885, 893, 902, 912, 1068, 1077, 1086, 1095, 1103, 1112, 1122, 1130, 1149, 1158, 1167].forEach(x => { box(x - 1, 266, 7, 2); box(x, 265, 3, 1); });
[1121, 1130, 1140, 1149, 1158, 1166].forEach(x => { box(x, 247, 5, 2); box(x + 2, 249, 4, 1); box(x + 1, 246, 2, 1); });
box(1174, 268, 2, 2); box(1183, 268, 6, 1); box(1198, 268, 4, 2);
mark(1214, 235, 4); mark(1220, 246); mark(1214, 255, 4); mark(1217, 262, 3);
[[961, '地'], [978, '质'], [995, '描'], [1012, '述']].forEach(([x, t]) => out.push(`<text x="${x}" y="251" font-size="7" font-weight="900">${t}</text>`));
out.push('<text x="991" y="187" font-size="17" font-family="Liberation Serif, Noto Sans CJK SC, serif">Z K 3−1</text><text x="1048" y="187" font-size="15" font-weight="700">图</text>');

document.getElementById('log').innerHTML = `<svg width="560" height="843" viewBox="741 158 560 843" shape-rendering="crispEdges"><defs>
<pattern id="script" x="942" y="0" width="3" height="4" patternUnits="userSpaceOnUse"><path d="M0 0h3v4H0z"/><path d="M1 1h1v1H1z" fill="#fff"/></pattern></defs>${out.join('')}</svg>`;
```
